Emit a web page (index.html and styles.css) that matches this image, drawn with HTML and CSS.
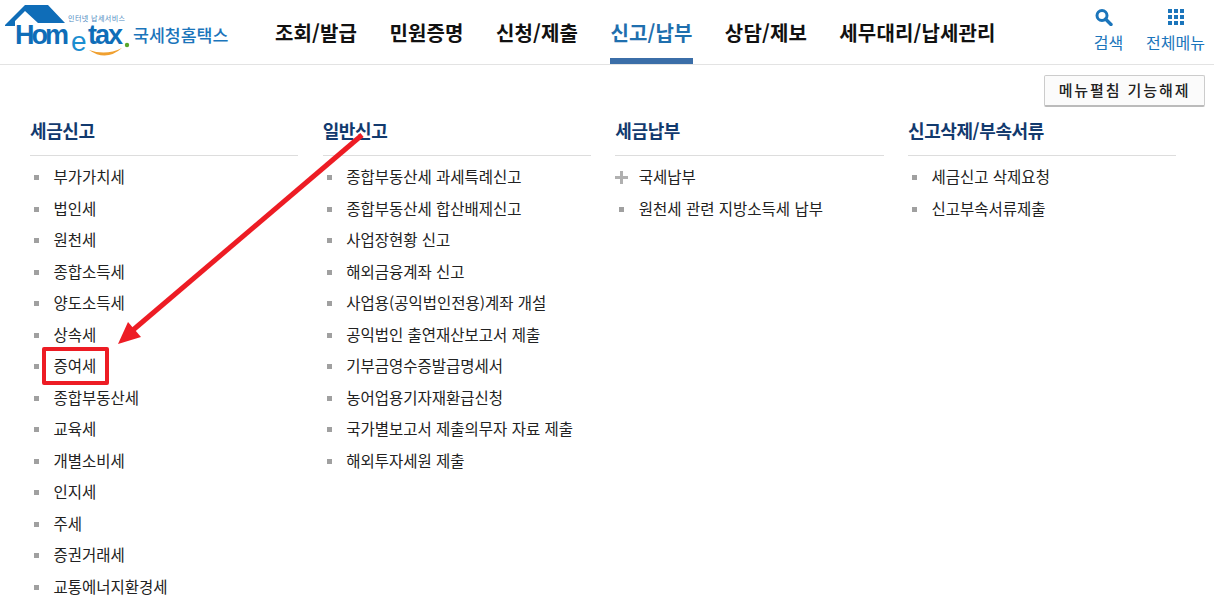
FILE: index.html
```html
<!DOCTYPE html>
<html lang="ko">
<head>
    <meta charset="UTF-8">
    <meta name="viewport" content="width=device-width, initial-scale=1.0">
    <title>Hometax</title>
    <link rel="stylesheet" href="styles.css">
</head>
<body>
    <header class="top">
        <a class="logo">
            <svg width="232" height="62" viewBox="0 0 232 62">
                <path d="M5 25 L25 5 L48 5 L65 23 L38 23 L25 11 L15 21 L15 26 L5 26 Z" fill="#0f6db8"/>
                <text x="68" y="21" class="logo-small" textLength="57">인터넷 납세서비스</text>
                <text x="15" y="44" class="logo-home" textLength="54">Hom</text>
                <text x="71" y="51" class="logo-e">e</text>
                <text x="88" y="44" class="logo-home" textLength="35">tax</text>
                <circle cx="127" cy="45" r="2.2" fill="#5aa82c"/>
                <path d="M89 50 Q106 62 122 48 Q106 56 89 50 Z" fill="#f0a030"/>
                <text x="133" y="42" class="logo-name">국세청홈택스</text>
            </svg>
        </a>
        <nav class="gnb">
            <a>조회/발급</a>
            <a>민원증명</a>
            <a>신청/제출</a>
            <a class="on">신고/납부</a>
            <a>상담/제보</a>
            <a>세무대리/납세관리</a>
        </nav>
        <div class="util">
            <a class="util-item">
                <svg class="ico-search" width="18" height="18" viewBox="0 0 18 18">
                    <circle cx="7" cy="7.5" r="5" fill="none" stroke="#1b75bb" stroke-width="3"/>
                    <path d="M10.5 11 L16 16.5" stroke="#1b75bb" stroke-width="3.4" stroke-linecap="round"/>
                </svg>
                <span>검색</span>
            </a>
            <a class="util-item">
                <svg width="18" height="18" viewBox="0 0 18 18" fill="#1b75bb">
                    <rect x="1" y="1" width="4" height="4"/><rect x="7" y="1" width="4" height="4"/><rect x="13" y="1" width="4" height="4"/>
                    <rect x="1" y="7" width="4" height="4"/><rect x="7" y="7" width="4" height="4"/><rect x="13" y="7" width="4" height="4"/>
                    <rect x="1" y="13" width="4" height="4"/><rect x="7" y="13" width="4" height="4"/><rect x="13" y="13" width="4" height="4"/>
                </svg>
                <span>전체메뉴</span>
            </a>
        </div>
    </header>

    <div class="tools">
        <button class="btn-fold">메뉴펼침 기능해제</button>
    </div>

    <main class="menu">
        <section class="col">
            <h2>세금신고</h2>
            <ul>
                <li>부가가치세</li>
                <li>법인세</li>
                <li>원천세</li>
                <li>종합소득세</li>
                <li>양도소득세</li>
                <li>상속세</li>
                <li class="mark"><span>증여세</span></li>
                <li>종합부동산세</li>
                <li>교육세</li>
                <li>개별소비세</li>
                <li>인지세</li>
                <li>주세</li>
                <li>증권거래세</li>
                <li>교통에너지환경세</li>
            </ul>
        </section>
        <section class="col">
            <h2>일반신고</h2>
            <ul>
                <li>종합부동산세 과세특례신고</li>
                <li>종합부동산세 합산배제신고</li>
                <li>사업장현황 신고</li>
                <li>해외금융계좌 신고</li>
                <li>사업용(공익법인전용)계좌 개설</li>
                <li>공익법인 출연재산보고서 제출</li>
                <li>기부금영수증발급명세서</li>
                <li>농어업용기자재환급신청</li>
                <li>국가별보고서 제출의무자 자료 제출</li>
                <li>해외투자세원 제출</li>
            </ul>
        </section>
        <section class="col">
            <h2>세금납부</h2>
            <ul>
                <li class="plus">국세납부</li>
                <li>원천세 관련 지방소득세 납부</li>
            </ul>
        </section>
        <section class="col">
            <h2>신고삭제/부속서류</h2>
            <ul>
                <li>세금신고 삭제요청</li>
                <li>신고부속서류제출</li>
            </ul>
        </section>
    </main>

    <svg class="arrow" width="270" height="220" viewBox="0 0 270 220">
        <path d="M244 2 L15 197" stroke="#ed1c24" stroke-width="5" fill="none"/>
        <path d="M0 211 L10 189 L23 204 Z" fill="#ed1c24"/>
    </svg>
</body>
</html>
```

FILE: styles.css
```css
html, body {
    margin: 0;
    padding: 0;
    height: 607px;
    overflow: hidden;
}
body {
    position: relative;
    font-family: "Noto Sans CJK KR", "Noto Sans", sans-serif;
    color: #222;
    background: #fff;
}
a {
    color: inherit;
    text-decoration: none;
}
.top {
    display: flex;
    height: 64px;
    border-bottom: 1px solid #e3e3e3;
}
.logo {
    display: block;
    width: 275px;
    flex-shrink: 0;
}
.logo-small {
    font-size: 7px;
    fill: #4c88c0;
}
.logo-home {
    font-family: "Liberation Sans", sans-serif;
    font-size: 27px;
    font-weight: bold;
    fill: #0f6db8;
}
.logo-e {
    font-family: "Liberation Sans", sans-serif;
    font-size: 28px;
    fill: #1b8ed0;
}
.logo-name {
    font-size: 17.3px;
    font-weight: 500;
    fill: #1b75bb;
}
.gnb {
    display: flex;
    gap: 32.3px;
    flex: 1;
}
.gnb a {
    height: 58px;
    line-height: 66px;
    font-size: 20px;
    font-weight: 700;
    color: #111;
    letter-spacing: 0.15px;
}
.gnb a.on {
    color: #1f6fae;
    border-bottom: 6px solid #3b6ea8;
}
.util {
    display: flex;
    gap: 23px;
    padding: 8px 9px 0 0;
}
.util-item {
    display: flex;
    flex-direction: column;
    align-items: center;
    gap: 4px;
    font-size: 16px;
    color: #1b75bb;
}
.ico-search {
    margin-right: 8px;
}
.tools {
    display: flex;
    justify-content: flex-end;
    padding: 10px 9px 0 0;
}
.btn-fold {
    width: 161px;
    height: 32px;
    background: #fbfbfb;
    border: 1px solid #ccc;
    border-bottom: 2px solid #bbb;
    border-radius: 2px;
    font-family: inherit;
    font-size: 15px;
    font-weight: 500;
    letter-spacing: 1.9px;
    line-height: 26px;
    color: #222;
    padding: 0 0 2px;
}
.menu {
    display: flex;
    gap: 24.33px;
    padding: 8px 0 0 30px;
}
.col {
    width: 268.33px;
    flex-shrink: 0;
}
.col h2 {
    margin: 0;
    height: 40px;
    font-size: 18px;
    font-weight: 700;
    line-height: 30px;
    color: #123a6e;
    letter-spacing: -0.4px;
    border-bottom: 1px solid #ddd;
}
.col ul {
    list-style: none;
    margin: 0;
    padding: 5px 0 0;
}
.col li {
    position: relative;
    height: 31.5px;
    line-height: 31.5px;
    padding-left: 23.5px;
    font-size: 15.5px;
    color: #222;
}
.col li::before {
    content: "";
    position: absolute;
    left: 4px;
    top: 14px;
    width: 5px;
    height: 5px;
    background: #a0a0a0;
}
.col li.plus::before {
    left: 0;
    top: 15px;
    width: 13px;
    height: 3px;
    background: #b0b0b0;
}
.col li.plus::after {
    content: "";
    position: absolute;
    left: 5px;
    top: 10px;
    width: 3px;
    height: 13px;
    background: #b0b0b0;
}
.mark span {
    position: relative;
    display: inline-block;
}
.mark span::after {
    content: "";
    position: absolute;
    left: -12px;
    right: -13px;
    top: -3px;
    bottom: -3.5px;
    border: 4px solid #ed1c24;
    border-radius: 2px;
}
.arrow {
    position: absolute;
    left: 118px;
    top: 133px;
}
```
